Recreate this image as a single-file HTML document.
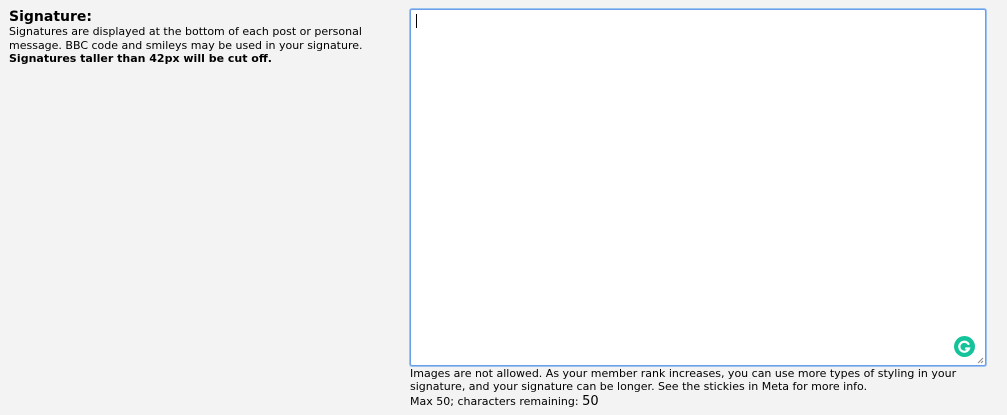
<!DOCTYPE html>
<html><head><style>
body{margin:0;background:#f3f3f3;font-family:"DejaVu Sans",Verdana,sans-serif;color:#000;width:1007px;height:415px;overflow:hidden;position:relative}
.h{position:absolute;left:9px;top:9px;font-weight:bold;font-size:14px}
.d{position:absolute;left:9px;top:25px;font-size:11px;line-height:13.5px;width:395px}
.ta{position:absolute;left:410px;top:9px;width:574px;height:355px;background:#fff;border:1px solid #6aa0e8;box-shadow:0 0 0 1px #9cc1f3;border-radius:2px}
.cur{position:absolute;left:5px;top:4px;width:1px;height:14px;background:#000}
.g{position:absolute;right:10px;bottom:8px;width:21px;height:21px;border-radius:50%;background:#15c39a}
.rs{position:absolute;right:1px;bottom:1px}
.n{position:absolute;left:410px;top:367px;font-size:11px;line-height:13px;width:575px}
.m{position:absolute;left:410px;top:394px;font-size:11px}
.m b{font-weight:normal;font-size:13px}
</style></head><body>
<div class="h">Signature:</div>
<div class="d">Signatures are displayed at the bottom of each post or personal message. BBC code and smileys may be used in your signature.<br><b>Signatures taller than 42px will be cut off.</b></div>
<div class="ta"><div class="cur"></div>
<div class="g"><svg width="21" height="21" viewBox="0 0 21 21"><path d="M14.5 8 A5 5 0 1 0 15 12.5 L12 12.5" fill="none" stroke="#fff" stroke-width="2.2" stroke-linecap="round"/></svg></div>
<svg class="rs" width="7" height="7"><path d="M6 1L1 6M6 4L4 6" stroke="#888" stroke-width="1"/></svg></div>
<div class="n">Images are not allowed. As your member rank increases, you can use more types of styling in your<br>signature, and your signature can be longer. See the stickies in Meta for more info.</div>
<div class="m">Max 50; characters remaining: <b>50</b></div>
</body></html>
